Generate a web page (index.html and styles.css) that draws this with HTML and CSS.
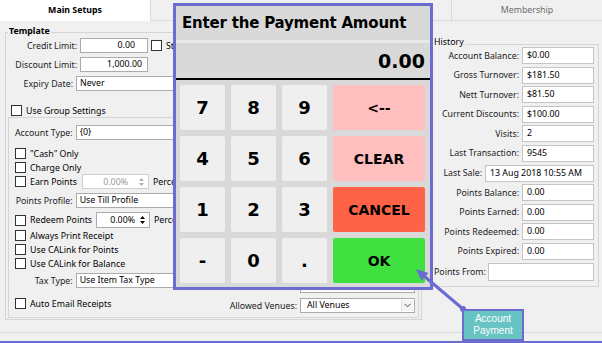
FILE: index.html
```html
<!DOCTYPE html>
<html lang="en">
<head>
    <meta charset="UTF-8">
    <title>Main Setups - Account Payment</title>
    <link rel="stylesheet" href="styles.css">
</head>
<body>
    <div class="window">
        <div class="tabs">
            <div class="tab tab-main">Main Setups</div>
            <div class="tab tab-hidden"></div>
            <div class="tab tab-member">Membership</div>
        </div>

        <div class="panel">
            <!-- Template group -->
            <div class="group template">
                <span class="group-title title-bold">Template</span>
                <div class="row row-first">
                    <span class="lbl">Credit Limit:</span>
                    <span class="field field-num field-credit">0.00</span>
                    <span class="check check-gap"></span>
                    <span>Stop Credit</span>
                </div>
                <div class="row">
                    <span class="lbl">Discount Limit:</span>
                    <span class="field field-num">1,000.00</span>
                </div>
                <div class="row">
                    <span class="lbl lbl-short">Expiry Date:</span>
                    <span class="field field-wide">Never</span>
                </div>
                <div class="check-row check-row-group">
                    <span class="check"></span>
                    <span>Use Group Settings</span>
                </div>

                <div class="group inner">
                    <div class="inner-left">
                        <div class="row row-account">
                            <span class="lbl lbl-inner">Account Type:</span>
                            <span class="field field-long">{0}</span>
                        </div>
                        <div class="check-row cr-cash">
                            <span class="check"></span>
                            <span>"Cash" Only</span>
                        </div>
                        <div class="check-row cr-3">
                            <span class="check"></span>
                            <span>Charge Only</span>
                        </div>
                        <div class="row row-earn">
                            <div class="check-box-label earn">
                                <span class="check"></span>
                                <span>Earn Points</span>
                            </div>
                            <span class="spin spin-earn disabled">
                                <span class="spin-value">0.00%</span>
                                <svg class="spin-arrows" width="7" height="12" viewBox="0 0 7 12"><path d="M1 5 L3.5 2 L6 5Z M1 7 L3.5 10 L6 7Z"/></svg>
                            </span>
                            <span class="perce">Percent</span>
                        </div>
                        <div class="row row-mt4">
                            <span class="lbl lbl-inner">Points Profile:</span>
                            <span class="field field-long">Use Till Profile</span>
                        </div>
                        <div class="row row-redeem">
                            <div class="check-box-label redeem">
                                <span class="check"></span>
                                <span>Redeem Points</span>
                            </div>
                            <span class="spin spin-redeem">
                                <span class="spin-value">0.00%</span>
                                <svg class="spin-arrows" width="7" height="12" viewBox="0 0 7 12"><path d="M1 5 L3.5 2 L6 5Z M1 7 L3.5 10 L6 7Z"/></svg>
                            </span>
                            <span class="perce">Percent</span>
                        </div>
                        <div class="check-row cr-2">
                            <span class="check"></span>
                            <span>Always Print Receipt</span>
                        </div>
                        <div class="check-row cr-3">
                            <span class="check"></span>
                            <span>Use CALink for Points</span>
                        </div>
                        <div class="check-row cr-3">
                            <span class="check"></span>
                            <span>Use CALink for Balance</span>
                        </div>
                        <div class="row row-mt4">
                            <span class="lbl lbl-inner">Tax Type:</span>
                            <span class="field field-long">Use Item Tax Type</span>
                        </div>
                        <div class="check-row cr-email">
                            <span class="check"></span>
                            <span>Auto Email Receipts</span>
                        </div>
                    </div>
                    <div class="inner-right">
                        <div class="row">
                            <span class="lbl-venue">Default Venue:</span>
                            <span class="select"><span class="select-text"></span><span class="select-btn"><svg width="7" height="5" viewBox="0 0 7 5"><path d="M0.5 0.8 L3.5 3.8 L6.5 0.8" fill="none" stroke="#555" stroke-width="1"/></svg></span></span>
                        </div>
                        <div class="row">
                            <span class="lbl-venue">Allowed Venues:</span>
                            <span class="select"><span class="select-text">All Venues</span><span class="select-btn"><svg width="7" height="5" viewBox="0 0 7 5"><path d="M0.5 0.8 L3.5 3.8 L6.5 0.8" fill="none" stroke="#555" stroke-width="1"/></svg></span></span>
                        </div>
                    </div>
                </div>
            </div>

            <!-- History group -->
            <div class="group history">
                <span class="group-title title-history">History</span>
                <div class="hist-rows">
                    <div class="hist-row"><span class="hist-lbl">Account Balance:</span><span class="hist-field">$0.00</span></div>
                    <div class="hist-row"><span class="hist-lbl">Gross Turnover:</span><span class="hist-field">$181.50</span></div>
                    <div class="hist-row"><span class="hist-lbl">Nett Turnover:</span><span class="hist-field">$81.50</span></div>
                    <div class="hist-row"><span class="hist-lbl">Current Discounts:</span><span class="hist-field">$100.00</span></div>
                    <div class="hist-row"><span class="hist-lbl">Visits:</span><span class="hist-field">2</span></div>
                    <div class="hist-row"><span class="hist-lbl">Last Transaction:</span><span class="hist-field">9545</span></div>
                    <div class="hist-row"><span class="hist-lbl">Last Sale:</span><span class="hist-field hist-date">13 Aug 2018 10:55 AM</span></div>
                    <div class="hist-row"><span class="hist-lbl">Points Balance:</span><span class="hist-field">0.00</span></div>
                    <div class="hist-row"><span class="hist-lbl">Points Earned:</span><span class="hist-field">0.00</span></div>
                    <div class="hist-row"><span class="hist-lbl">Points Redeemed:</span><span class="hist-field">0.00</span></div>
                    <div class="hist-row"><span class="hist-lbl">Points Expired:</span><span class="hist-field">0.00</span></div>
                    <div class="hist-row hist-from"><span>Points From:</span><span class="hist-field hist-field-from"></span></div>
                </div>
            </div>
        </div>

        <!-- Payment keypad dialog -->
        <div class="dialog">
            <div class="dialog-title">Enter the Payment Amount</div>
            <div class="dialog-amount">0.00</div>
            <div class="keypad">
                <div class="key">7</div>
                <div class="key">8</div>
                <div class="key">9</div>
                <div class="key key-wide key-pink">&lt;--</div>
                <div class="key">4</div>
                <div class="key">5</div>
                <div class="key">6</div>
                <div class="key key-wide key-pink">CLEAR</div>
                <div class="key">1</div>
                <div class="key">2</div>
                <div class="key">3</div>
                <div class="key key-wide key-cancel">CANCEL</div>
                <div class="key">-</div>
                <div class="key">0</div>
                <div class="key">.</div>
                <div class="key key-wide key-ok">OK</div>
            </div>
        </div>

        <!-- Callout -->
        <svg class="callout-arrow" width="602" height="343" viewBox="0 0 602 343">
            <line x1="463" y1="309" x2="424" y2="276" stroke="#6b6bd0" stroke-width="3"/>
            <polygon points="416,269 428.5,273 421.5,281" fill="#6b6bd0"/>
            <circle cx="463" cy="309" r="3" fill="#6b6bd0"/>
        </svg>
        <div class="callout">Account<br>Payment</div>
    </div>
</body>
</html>
```

FILE: styles.css
```css
body {
    margin: 0;
    font-family: "Noto Sans", "Liberation Sans", sans-serif;
    font-size: 8.8px;
    color: #000;
}
.window {
    position: relative;
    width: 602px;
    height: 343px;
    box-sizing: border-box;
    background-color: #f0f0f0;
    border-bottom: 2px solid #6b6bd0;
    overflow: hidden;
}

/* tabs */
.tabs {
    display: flex;
    height: 21px;
}
.tab {
    box-sizing: border-box;
    height: 21px;
    border-right: 1px solid #d9d9d9;
    border-bottom: 1px solid #d9d9d9;
    display: flex;
    align-items: center;
    justify-content: center;
    color: #6d6d6d;
}
.tab-main {
    width: 151px;
    background-color: #fff;
    border-bottom-color: #fff;
    font-weight: bold;
    color: #000;
}
.tab-hidden {
    width: 301px;
}
.tab-member {
    flex: 1;
    border-right: none;
}

/* panel */
.panel {
    display: flex;
    align-items: flex-start;
    height: 312px;
    box-sizing: border-box;
    padding: 11px 3px 0 5px;
    border-bottom: 1px solid #dcdcdc;
}
.group {
    box-sizing: border-box;
    border: 1px solid #d5d5d5;
}
.group-title {
    display: block;
    width: fit-content;
    padding: 0 1px;
    line-height: 11px;
    background-color: #f0f0f0;
}
.title-bold {
    font-weight: bold;
    margin: -7px 0 0 2px;
}
.title-history {
    margin: -8px 0 0 0;
}

.template {
    width: 417px;
    height: 288px;
}
.row {
    display: flex;
    align-items: center;
    height: 15px;
    margin-top: 4px;
    white-space: nowrap;
}
.row-first {
    margin-top: 1px;
}
.lbl {
    width: 71px;
    margin-right: 3px;
    text-align: right;
    color: #222;
}
.lbl-short {
    width: 67px;
}
.lbl-inner {
    width: 67px;
}
.field {
    box-sizing: border-box;
    height: 15px;
    line-height: 13px;
    border: 1px solid #ababab;
    background-color: #fff;
    padding: 0 3px;
}
.field-num {
    width: 68px;
    text-align: right;
    padding-right: 5px;
}
.field-credit {
    padding-right: 12px;
}
.field-wide {
    width: 150px;
}
.field-long {
    width: 140px;
}
.check {
    box-sizing: border-box;
    width: 11px;
    height: 11px;
    flex-shrink: 0;
    border: 1px solid #333;
    background-color: #fff;
    margin-right: 4px;
}
.check-gap {
    margin-left: 3px;
}
.check-row {
    display: flex;
    align-items: center;
    height: 11px;
    padding-left: 6px;
    white-space: nowrap;
}
.check-row-group {
    height: 13px;
    margin-top: 13px;
    padding-left: 5px;
}

/* inner group */
.inner {
    display: flex;
    width: 411px;
    height: 201px;
    margin-left: 2px;
}
.inner-left {
    width: 200px;
}
.inner-right {
    flex: 1;
    display: flex;
    flex-direction: column;
    justify-content: flex-end;
    align-items: flex-end;
    padding: 0 3px 4px 0;
    gap: 5px;
}
.inner-right .row {
    margin-top: 0;
}
.row-account {
    margin-top: 7px;
}
.cr-cash {
    margin-top: 8px;
}
.cr-2 {
    margin-top: 2px;
}
.cr-3 {
    margin-top: 3px;
}
.cr-email {
    margin-top: 10px;
}
.row-earn {
    margin-top: 1px;
}
.row-mt4 {
    margin-top: 4px;
}
.row-redeem {
    height: 16px;
}
.check-box-label {
    display: flex;
    align-items: center;
    box-sizing: border-box;
    padding-left: 6px;
}
.earn {
    width: 73px;
}
.redeem {
    width: 87px;
}
.spin {
    box-sizing: border-box;
    display: flex;
    align-items: center;
    height: 15px;
    border: 1px solid #ababab;
    background-color: #fff;
}
.spin-earn {
    width: 67px;
    border-color: #cfcfcf;
    color: #9a9a9a;
}
.spin-redeem {
    width: 54px;
    height: 16px;
}
.spin-value {
    flex: 1;
    text-align: right;
}
.spin-arrows {
    margin: 0 3px 0 4px;
    fill: #000;
}
.disabled .spin-arrows {
    fill: #b0b0b0;
}
.spin-earn .spin-value {
    padding-right: 6px;
}
.perce {
    margin-left: 4px;
}
.lbl-venue {
    margin-right: 3px;
    color: #222;
}
.select {
    box-sizing: border-box;
    display: flex;
    width: 115px;
    height: 15px;
    border: 1px solid #ababab;
    background-color: #fff;
}
.select-text {
    flex: 1;
    line-height: 13px;
    padding-left: 6px;
}
.select-btn {
    width: 11px;
    margin: 1px;
    display: flex;
    align-items: center;
    justify-content: center;
    background-color: #f4f4f4;
    border-left: 1px solid #dcdcdc;
}

/* history group */
.history {
    width: 167px;
    height: 243px;
    margin: 12px 0 0 10px;
}
.hist-rows {
    display: flex;
    flex-direction: column;
    gap: 2.6px;
    padding: 0 4px 0 0;
    margin-top: -1px;
}
.hist-row {
    display: flex;
    align-items: center;
    justify-content: flex-end;
    height: 17px;
    white-space: nowrap;
    color: #222;
}
.hist-lbl {
    margin-right: 3px;
}
.hist-field {
    box-sizing: border-box;
    width: 72px;
    height: 17px;
    line-height: 15px;
    padding-left: 4px;
    border: 1px solid #c4c4c4;
    background-color: #fff;
    color: #000;
}
.hist-date {
    width: 109px;
}
.hist-from {
    justify-content: space-between;
    height: 18px;
    padding-left: 1px;
}
.hist-field-from {
    width: 106px;
    height: 18px;
}

/* keypad dialog */
.dialog {
    position: absolute;
    left: 173px;
    top: 3px;
    width: 260px;
    height: 287px;
    box-sizing: border-box;
    border: 3px solid #6b6bd0;
    background-color: #d9d9d9;
    font-family: "DejaVu Sans", sans-serif;
    font-weight: bold;
    color: #000;
}
.dialog-title {
    height: 34px;
    display: flex;
    align-items: center;
    padding-left: 6px;
    font-size: 15px;
    letter-spacing: -0.2px;
    white-space: nowrap;
    border-bottom: 3px solid #e8e8e8;
}
.dialog-amount {
    height: 35px;
    display: flex;
    align-items: center;
    justify-content: flex-end;
    padding-right: 5px;
    font-size: 19px;
    border-bottom: 2px solid #000;
}
.keypad {
    display: grid;
    grid-template-columns: 45px 45px 45px 92px;
    grid-auto-rows: 45px;
    gap: 6px;
    padding: 5px 5px 0 4px;
}
.key {
    display: flex;
    align-items: center;
    justify-content: center;
    background-color: #efefef;
    border-radius: 2px;
    font-size: 18px;
}
.key-wide {
    font-size: 14px;
}
.key-pink {
    background-color: #ffbfbf;
}
.key-cancel {
    background-color: #ff6347;
}
.key-ok {
    background-color: #40e040;
}

/* callout */
.callout-arrow {
    position: absolute;
    left: 0;
    top: 0;
    pointer-events: none;
}
.callout {
    position: absolute;
    left: 462px;
    top: 309px;
    width: 62px;
    height: 32px;
    box-sizing: border-box;
    border: 2px solid #6b6bd0;
    background-color: #68c3c3;
    color: #fff;
    font-family: "Liberation Sans", sans-serif;
    font-size: 10px;
    line-height: 12px;
    text-align: center;
    padding-top: 2px;
}
```
